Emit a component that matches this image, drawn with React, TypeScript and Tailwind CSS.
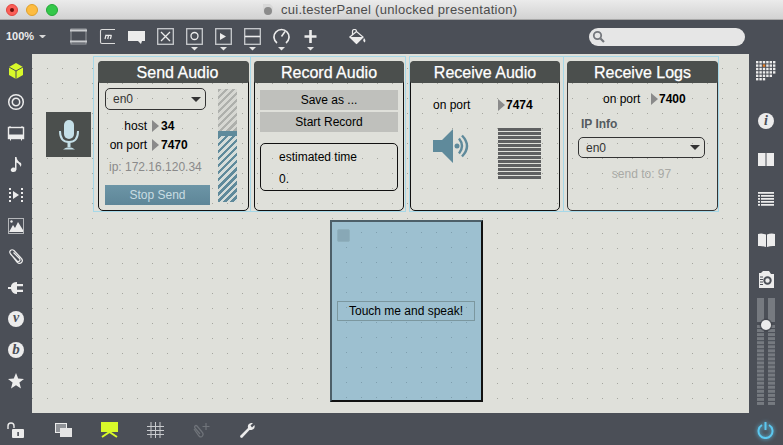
import React from 'react';

const Tri = () => (
  <svg width="7" height="12" viewBox="0 0 7 12" className="shrink-0">
    <path d="M0 0 L7 6 L0 12 Z" fill="#8a8a8a" />
  </svg>
);

const Caret = ({ c = '#333', w = 10 }: { c?: string; w?: number }) => (
  <svg width={w} height={w / 2} viewBox="0 0 10 5" className="shrink-0">
    <path d="M0 0 H10 L5 5 Z" fill={c} />
  </svg>
);

const Dropdown = ({ className }: { className: string }) => (
  <div className={`flex items-center justify-between border border-[#333] rounded-[5px] pl-[7px] pr-[4px] text-[12px] text-[#333] ${className}`}>
    <span>en0</span>
    <Caret />
  </div>
);

const Header = ({ title, className = '' }: { title: string; className?: string }) => (
  <div className={`h-[22px] -mx-px -mt-px rounded-t-[4px] rounded-b-[2px] bg-[#4b4f4d] text-white text-[16px] leading-[23px] text-center shrink-0 [-webkit-text-stroke:0.25px_white] ${className}`}>
    {title}
  </div>
);

const white = '#ececec';

const ToolIcon = ({ children, caret }: { children: React.ReactNode; caret?: boolean }) => (
  <div className="relative w-[17px] h-[17px]">
    <svg width="17" height="17" viewBox="0 0 17 17" fill="none" stroke={white} strokeWidth="1.3">
      {children}
    </svg>
    {caret && (
      <div className="absolute left-[5px] top-[19px]">
        <Caret c="#e4e4e4" w={7} />
      </div>
    )}
  </div>
);

const SideIcon = ({ children }: { children: React.ReactNode }) => (
  <svg width="18" height="18" viewBox="0 0 18 18" fill="#ececec" className="shrink-0">
    {children}
  </svg>
);

const RightDots = () => {
  const dots: React.ReactNode[] = [];
  for (let r = 0; r < 6; r++) {
    for (let c = 0; c < 6; c++) {
      if (r === 5 && c > 2) continue;
      if (r === 4 && c > 4) continue;
      dots.push(<rect key={`${r}-${c}`} x={c * 3.4} y={r * 3.4} width="2.4" height="2.4" fill={r === 1 && c === 2 ? '#e8822a' : '#ececec'} />);
    }
  }
  return (
    <svg width="20" height="20" viewBox="0 0 20 20" className="shrink-0">
      {dots}
    </svg>
  );
};

const Book = () => (
  <svg width="17" height="14" viewBox="0 0 17 14" className="block shrink-0">
    <path d="M0 1 Q4 0 8 1.5 V14 Q4 12.5 0 13 Z" fill="#ececec" />
    <path d="M9 1.5 Q13 0 17 1 V13 Q13 12.5 9 14 Z" fill="#ececec" />
  </svg>
);

const MeterSlider = () => {
  const segs: React.ReactNode[] = [];
  for (let i = 0; i < 20; i++) {
    const y = 27 + i * 4.05;
    segs.push(<rect key={`l${i}`} x="0" y={y} width="7" height="3" fill="#767a80" />);
    segs.push(<rect key={`r${i}`} x="11" y={y} width="7" height="3" fill="#767a80" />);
  }
  return (
    <svg width="18" height="109" viewBox="0 0 18 109" className="block shrink-0">
      <rect x="0" y="0" width="7" height="24" fill="#767a80" />
      <rect x="11" y="0" width="7" height="24" fill="#767a80" />
      {segs}
      <circle cx="9" cy="27" r="6.5" fill="#3e4147" opacity="0.6" />
      <circle cx="9" cy="27" r="5" fill="#ececec" />
    </svg>
  );
};

const hatchGrey = 'bg-[repeating-linear-gradient(135deg,#aeb0ac_0,#aeb0ac_2.5px,#d6d7d2_2.5px,#d6d7d2_5px)]';
const hatchTeal = 'bg-[repeating-linear-gradient(135deg,#5f8a9b_0,#5f8a9b_2.5px,#d5dcd9_2.5px,#d5dcd9_5px)]';

export default function App() {
  return (
    <div className="w-[783px] h-[445px] overflow-hidden flex flex-col bg-[#4b4f57] font-['Liberation_Sans',Arial,sans-serif]">
      {/* title bar */}
      <div className="h-[20px] shrink-0 flex items-center bg-gradient-to-b from-[#ebebeb] to-[#d2d2d2] border-b border-[#a8a8a8]">
        <div className="flex gap-[8px] pl-[6px]">
          <div className="w-[12px] h-[12px] rounded-full bg-[#fb5f57] border border-[#e2463f] flex items-center justify-center">
            <div className="w-[4px] h-[4px] rounded-full bg-[#6b0f0a]" />
          </div>
          <div className="w-[12px] h-[12px] rounded-full bg-[#fdbc40] border border-[#e0a028]" />
          <div className="w-[12px] h-[12px] rounded-full bg-[#34c84a] border border-[#24a838]" />
        </div>
        <div className="ml-[205px] flex items-center gap-[8px]">
          <svg width="10" height="12" viewBox="0 0 10 12">
            <path d="M0 0 H7 L10 3 V12 H0 Z" fill="#d8d8d8" />
            <circle cx="5" cy="7" r="4" fill="#8b8b8b" />
          </svg>
          <span className="text-[13px] tracking-[0.28px] text-[#4c4c4c]">cui.testerPanel (unlocked presentation)</span>
        </div>
      </div>

      {/* toolbar */}
      <div className="h-[34px] shrink-0 flex items-center pb-[1px]">
        <span className="ml-[6px] w-[33px] text-[11px] font-bold text-[#ececec]">100%</span>
        <Caret c="#d8d8d8" w={7} />
        <div className="ml-[24px] flex items-center gap-[12px]">
          <ToolIcon>
            <rect x="1" y="1" width="15" height="15" strokeWidth="1" stroke="#9a9da2" />
            <path d="M0 2.5 H17 M0 13.5 H17" strokeWidth="2" stroke="#c9cbce" />
          </ToolIcon>
          <ToolIcon>
            <path d="M16 1.5 H3 Q1.5 1.5 1.5 3 V14 Q1.5 15.5 3 15.5 H16" stroke="#dcdcdc" strokeWidth="1.1" />
            <path d="M6 11 L7 7 M8.7 11 L9.7 7 M11.4 11 L12.4 7 M6.5 7.4 H12.5" strokeWidth="1.2" />
          </ToolIcon>
          <ToolIcon>
            <path d="M0 3 H17 V13 H14 L13 16 L10 13 H0 Z" fill={white} stroke="none" />
          </ToolIcon>
          <ToolIcon>
            <rect x="0.7" y="0.7" width="15.6" height="15.6" stroke="#c9cbce" />
            <path d="M4 4 L13 13 M13 4 L4 13" />
          </ToolIcon>
          <ToolIcon caret>
            <rect x="0.7" y="0.7" width="15.6" height="15.6" stroke="#c9cbce" />
            <circle cx="8.5" cy="8" r="3.5" />
          </ToolIcon>
          <ToolIcon caret>
            <rect x="0.7" y="0.7" width="15.6" height="15.6" stroke="#c9cbce" />
            <path d="M5 5 L11 8.5 L5 12 Z" fill={white} stroke="none" />
          </ToolIcon>
          <ToolIcon caret>
            <rect x="0.7" y="0.7" width="15.6" height="15.6" stroke="#c9cbce" />
            <path d="M1 8.5 H16" strokeWidth="1.6" />
          </ToolIcon>
          <ToolIcon caret>
            <path d="M4 15 A7.5 7.5 0 1 1 13 15" strokeWidth="1.7" />
            <path d="M8.5 8.5 L12 3.5" strokeWidth="1.5" />
          </ToolIcon>
          <ToolIcon caret>
            <path d="M8.5 2 V15 M2.5 8.5 H14.5" strokeWidth="2.6" />
          </ToolIcon>
        </div>
        <svg width="17" height="16" viewBox="0 0 17 16" className="ml-[30px] shrink-0">
          <path d="M0.8 8 L7.5 2.5 L14 8 L7.5 14.5 Z" fill="none" stroke="#ececec" strokeWidth="1.2" />
          <path d="M0.5 8 H14.5 L7.5 15 Z" fill="#ececec" />
          <path d="M3.5 6 V2.5 Q3.5 0.5 5.5 0.5 Q7.5 0.5 7.5 2.5" fill="none" stroke="#ececec" strokeWidth="1.2" />
          <path d="M15 9 Q17.5 12 15.5 13.5 Q13.5 12 15 9" fill="#ececec" />
        </svg>
        <div className="ml-[223px] w-[156px] h-[18px] rounded-full bg-[#e6e6e6] flex items-center pl-[3px]">
          <svg width="13" height="13" viewBox="0 0 13 13" fill="none" stroke="#74777c" strokeWidth="1.8">
            <circle cx="5.5" cy="5.5" r="3.7" />
            <path d="M8.5 8.5 L12 12" strokeWidth="2.2" />
          </svg>
        </div>
      </div>

      {/* middle */}
      <div className="flex-1 flex min-h-0">
        <div className="w-[32px] shrink-0 flex flex-col items-center pt-[8px] gap-[13px]">
          <SideIcon>
            <path d="M9 1 L16 5 V13 L9 17 L2 13 V5 Z" fill="#d8f92a" />
            <path d="M2 5 L9 9 L16 5 M9 9 V17" stroke="#4b4f57" strokeWidth="1" fill="none" />
          </SideIcon>
          <SideIcon>
            <circle cx="9" cy="9" r="7.3" fill="none" stroke="#ececec" strokeWidth="1.5" />
            <circle cx="9" cy="9" r="3.7" fill="none" stroke="#ececec" strokeWidth="1.5" />
          </SideIcon>
          <SideIcon>
            <rect x="1.5" y="3.5" width="15" height="11" fill="none" stroke="#ececec" strokeWidth="1.4" />
            <rect x="1" y="10.5" width="16" height="4.5" fill="#ececec" />
            <path d="M3 2 V4 M15 2 V4 M3.5 15 V16.5 M14.5 15 V16.5" stroke="#ececec" />
          </SideIcon>
          <SideIcon>
            <path d="M8 2 H9.5 Q10 6 14 8 Q15 10 13.5 12 Q13 9 9.5 7.5 V14.5 Q9 17.5 5.5 17 Q3 16 4 14 Q5.5 12 8 12.8 Z" />
          </SideIcon>
          <SideIcon>
            <path d="M6 5 L12 9 L6 13 Z" />
            <path d="M2 2 H4 V4 H2 Z M2 6 H4 V8 H2 Z M2 10 H4 V12 H2 Z M2 14 H4 V16 H2 Z M14 2 H16 V4 H14 Z M14 6 H16 V8 H14 Z M14 10 H16 V12 H14 Z M14 14 H16 V16 H14 Z" />
          </SideIcon>
          <SideIcon>
            <rect x="1.5" y="1.5" width="15" height="15" fill="none" stroke="#b5b7ba" strokeWidth="1" />
            <circle cx="4.5" cy="4.5" r="1.2" />
            <path d="M2 15 L6 8 L8 11 L11 5 L16 13 V15 Z" />
          </SideIcon>
          <SideIcon>
            <path d="M3 5 L10 14 Q12.5 16.5 14.5 14.5 Q16.5 12.5 14 10 L7 2.5 Q5 1 3.5 2.5 Q2 4 3.5 6 L10 13 Q11.5 14 12.5 13 Q13.5 12 12.5 10.5 L6.5 4.5" fill="none" stroke="#ececec" strokeWidth="1.2" />
          </SideIcon>
          <SideIcon>
            <path d="M1 8 H4 V7 Q5 3 10 3 V15 Q5 15 4 10 H1 Z" />
            <path d="M10 5 H16 V7.3 H10 Z M10 10.7 H16 V13 H10 Z" />
          </SideIcon>
          <div className="my-px w-[16px] h-[16px] rounded-full bg-[#ececec] text-[#4b4f57] text-[14px] leading-[14px] font-bold italic text-center font-['Liberation_Serif',serif]">v</div>
          <div className="my-px w-[16px] h-[16px] rounded-full bg-[#ececec] text-[#4b4f57] text-[15px] leading-[15px] font-bold italic text-center font-['Liberation_Serif',serif]">b</div>
          <SideIcon>
            <path d="M9 1 L11.2 6.6 L17 6.9 L12.4 10.6 L14 16.4 L9 13.2 L4 16.4 L5.6 10.6 L1 6.9 L6.8 6.6 Z" />
          </SideIcon>
        </div>

        {/* canvas */}
        <div className="w-[717px] shrink-0 flex flex-col bg-[#dfe0da] bg-[radial-gradient(circle,#a5a69f_0.7px,transparent_1px)] bg-[length:15px_15px] bg-[position:8px_7px] text-black text-[12px]">
          <div className="flex pt-[2px] pl-[14px]">
            <div className="w-[45px] h-[45px] mt-[56px] bg-[#4b4f4d] flex items-center justify-center shrink-0">
              <svg width="20" height="30" viewBox="0 0 20 30">
                <rect x="5" y="0" width="10" height="19" rx="5" fill="#c5e0e8" />
                <path d="M1 11 Q1 22 10 22 Q19 22 19 11" fill="none" stroke="#c5e0e8" strokeWidth="2" />
                <path d="M10 22 V27" stroke="#c5e0e8" strokeWidth="3" />
                <path d="M4 29.5 Q10 25 16 29.5 Z" fill="#c5e0e8" />
              </svg>
            </div>
            <div className="w-[158px] h-[156px] ml-[2px] border border-[#a6d8e8] pl-[4px] pt-[4px] shrink-0">
              <div className="w-[151px] h-[150px] border border-[#111] rounded-[5px] flex flex-col">
                <Header title="Send Audio" className="pl-[8px]" />
                <div className="flex pl-[6px] pt-[5px]">
                  <div className="w-[105px] flex flex-col">
                    <Dropdown className="w-[101px] h-[22px]" />
                    <div className="mt-[6px] h-[19px] flex items-center">
                      <span className="w-[42px] text-right">host</span>
                      <span className="ml-[5px]"><Tri /></span>
                      <span className="ml-[2px] font-bold">34</span>
                    </div>
                    <div className="h-[19px] flex items-center">
                      <span className="w-[42px] text-right whitespace-nowrap">on port</span>
                      <span className="ml-[5px]"><Tri /></span>
                      <span className="ml-[2px] font-bold">7470</span>
                    </div>
                    <div className="mt-[5px] h-[17px] leading-[17px] pl-[4px] text-[#8a8a8a] whitespace-nowrap">ip: 172.16.120.34</div>
                    <div className="mt-[9px] h-[20px] w-[105px] bg-gradient-to-b from-[#6c95a6] to-[#5e8698] text-[#c8dce2] leading-[20px] text-center">Stop Send</div>
                  </div>
                  <div className="ml-[8px] mt-[1px] w-[19px] h-[113px] flex flex-col">
                    <div className={`h-[42px] ${hatchGrey}`} />
                    <div className="h-[5px] bg-[#5f8a9b]" />
                    <div className={`flex-1 ${hatchTeal}`} />
                  </div>
                </div>
              </div>
            </div>
            <div className="w-[155px] h-[156px] border border-[#a6d8e8] border-l-0 pl-[3px] pt-[4px] shrink-0">
              <div className="w-[150px] h-[150px] border border-[#111] rounded-[5px] flex flex-col">
                <Header title="Record Audio" />
                <div className="px-[5px] pt-[7px] flex flex-col">
                  <div className="h-[20px] bg-[#bfc0bc] leading-[20px] text-center">Save as ...</div>
                  <div className="mt-[2px] h-[20px] bg-[#bfc0bc] leading-[20px] text-center">Start Record</div>
                  <div className="mt-[11px] h-[48px] border border-[#111] rounded-[5px] flex flex-col pl-[18px] pt-[5px]">
                    <span className="leading-[16px]">estimated time</span>
                    <span className="mt-[6px] leading-[16px]">0.</span>
                  </div>
                </div>
              </div>
            </div>
            <div className="w-[154px] h-[156px] ml-[3px] border border-[#a6d8e8] border-r-0 pt-[4px] shrink-0">
              <div className="w-[150px] h-[150px] border border-[#111] rounded-[5px] flex flex-col">
                <Header title="Receive Audio" />
                <div className="flex pl-[22px] pt-[14px]">
                  <div className="w-[65px] flex flex-col">
                    <span className="leading-[16px]">on port</span>
                    <svg width="37" height="34" viewBox="0 0 37 34" className="mt-[16px]">
                      <path d="M0 11 H9 L20 0 V34 L9 23 H0 Z" fill="#5f8a9b" />
                      <circle cx="24" cy="17" r="2.5" fill="#5f8a9b" />
                      <path d="M26 9.5 Q32 17 26 24.5 M29 6.5 Q39 17 29 27.5" fill="none" stroke="#5f8a9b" strokeWidth="2.4" />
                    </svg>
                  </div>
                  <div className="flex flex-col">
                    <div className="h-[16px] flex items-center gap-[1px]">
                      <Tri />
                      <span className="font-bold">7474</span>
                    </div>
                    <div className="mt-[15px] w-[43px] h-[52px] bg-[repeating-linear-gradient(180deg,#5f6061_0,#5f6061_3px,#dfe0da_3px,#dfe0da_4px)]" />
                  </div>
                </div>
              </div>
            </div>
            <div className="w-[156px] h-[156px] border border-[#a6d8e8] pl-[3px] pt-[4px] shrink-0">
              <div className="w-[151px] h-[150px] border border-[#333] rounded-[5px] flex flex-col">
                <Header title="Receive Logs" />
                <div className="flex flex-col pl-[10px] pt-[8px]">
                  <div className="h-[16px] flex items-center pl-[25px]">
                    <span className="w-[48px] whitespace-nowrap">on port</span>
                    <Tri />
                    <span className="ml-px font-bold">7400</span>
                  </div>
                  <div className="mt-[9px] h-[16px] leading-[16px] pl-[3px] font-bold text-[#555b60]">IP Info</div>
                  <Dropdown className="mt-[5px] w-[127px] h-[21px]" />
                  <div className="mt-[8px] w-[127px] leading-[16px] text-center text-[#a9aaa6]">send to: 97</div>
                </div>
              </div>
            </div>
          </div>

          <div className="ml-[298px] mt-[8px] w-[153px] h-[182px] bg-[#9dc0d0] bg-[radial-gradient(circle,#7f9fae_0.7px,transparent_1px)] bg-[length:15px_15px] bg-[position:7px_3px] border-2 border-[#4d5f68] border-r-[#111] border-b-[#111] flex flex-col pl-[5px] pt-[7px]">
            <div className="w-[13px] h-[13px] rounded-[2px] bg-[#88a8b6] border border-[#8fb0bd]" />
            <div className="mt-[59px] w-[138px] h-[20px] border border-[#7b979f] leading-[18px] text-center">Touch me and speak!</div>
          </div>
        </div>

        <div className="flex-1 flex flex-col items-center pt-[7px]">
          <RightDots />
          <div className="mt-[32px] w-[16px] h-[16px] rounded-full bg-[#ececec] text-[#4b4f57] text-[14px] leading-[16px] font-bold italic text-center font-['Liberation_Serif',serif]">i</div>
          <div className="mt-[24px]">
            <svg width="16" height="13" viewBox="0 0 16 13" className="block">
              <rect width="7.5" height="13" fill="#ececec" />
              <rect x="8.5" width="7.5" height="13" fill="#ececec" />
            </svg>
          </div>
          <div className="mt-[26px]">
            <svg width="16" height="16" viewBox="0 0 16 16" className="block" fill="#ececec">
              <path d="M0 0 H16 V1.7 H0 Z M0 3 H2 V4.7 H0 Z M3 3 H16 V4.7 H3 Z M0 6 H2 V7.7 H0 Z M3 6 H16 V7.7 H3 Z M0 9 H2 V10.7 H0 Z M3 9 H16 V10.7 H3 Z M0 12 H2 V13.7 H0 Z M3 12 H16 V13.7 H3 Z" />
            </svg>
          </div>
          <div className="mt-[25px]"><Book /></div>
          <div className="mt-[24px]">
            <svg width="16" height="17" viewBox="0 0 16 17" className="block">
              <path d="M3 2 H1 V17 H16 V3 H13 L11 0 H5 Z" fill="#ececec" />
              <circle cx="9.5" cy="9.5" r="3.2" fill="none" stroke="#4b4f57" strokeWidth="2" />
              <path d="M2 6 H5 M2 8.5 H5 M2 11 H5 M2 13.5 H5" stroke="#4b4f57" />
            </svg>
          </div>
          <div className="mt-[10px]"><MeterSlider /></div>
        </div>
      </div>

      {/* bottom bar */}
      <div className="h-[32px] shrink-0 flex items-center pl-[7px] pr-[9px] pt-[2px]">
        <svg width="17" height="16" viewBox="0 0 17 16" fill="none" className="shrink-0">
          <path d="M1 7 V4 Q1 1 4 1 Q7 1 7 4 V6" stroke="#ececec" strokeWidth="1.4" />
          <rect x="5" y="7" width="12" height="9" rx="1" fill="#ececec" />
          <rect x="10.3" y="10" width="1.6" height="4" fill="#4b4f57" />
        </svg>
        <div className="ml-[31px] flex items-center gap-[29px]">
          <svg width="17" height="14" viewBox="0 0 17 14" className="shrink-0">
            <rect x="0.5" y="0.5" width="11" height="9" fill="#8f9297" stroke="#ececec" />
            <rect x="5" y="5" width="12" height="9" fill="#e4e4e4" />
          </svg>
          <svg width="17" height="16" viewBox="0 0 17 16" className="shrink-0">
            <rect x="0" y="0" width="17" height="10" fill="#d8f92a" />
            <path d="M1 15 L8.5 10 L16 15" fill="none" stroke="#d8f92a" strokeWidth="2" />
          </svg>
          <svg width="17" height="16" viewBox="0 0 17 16" fill="none" stroke="#c9cbce" strokeWidth="1" className="shrink-0">
            <path d="M0 4.5 H17 M0 8.5 H17 M0 12.5 H17 M4 0 V16 M8.5 0 V16 M13 0 V16" />
          </svg>
          <svg width="17" height="16" viewBox="0 0 17 16" fill="none" stroke="#70747a" strokeWidth="1.2" className="shrink-0">
            <path d="M1 7 L6 14 Q8 16 9.5 14 Q11 12 9 10 L4 4 Q3 3 2 4 Q1 5 2 6 L7 12" />
            <path d="M13 1 V8 M9.5 4.5 H16.5" />
          </svg>
          <svg width="17" height="17" viewBox="0 0 17 17" className="shrink-0">
            <path d="M1 14 L9 6 Q8 2 12 1 L14 1 L11.5 3.5 L13 5.5 L15.5 3 Q16.5 7 12.5 8 L10.5 8 L3 16 Q1 16 1 14 Z" fill="#ececec" />
          </svg>
        </div>
        <svg width="17" height="18" viewBox="0 0 17 18" fill="none" stroke="#5cc8f0" strokeWidth="2" className="ml-auto shrink-0 drop-shadow-[0_0_2px_#5cc8f0]">
          <path d="M5 4 A7 7 0 1 0 12 4" />
          <path d="M8.5 1 V9" />
        </svg>
      </div>
    </div>
  );
}
